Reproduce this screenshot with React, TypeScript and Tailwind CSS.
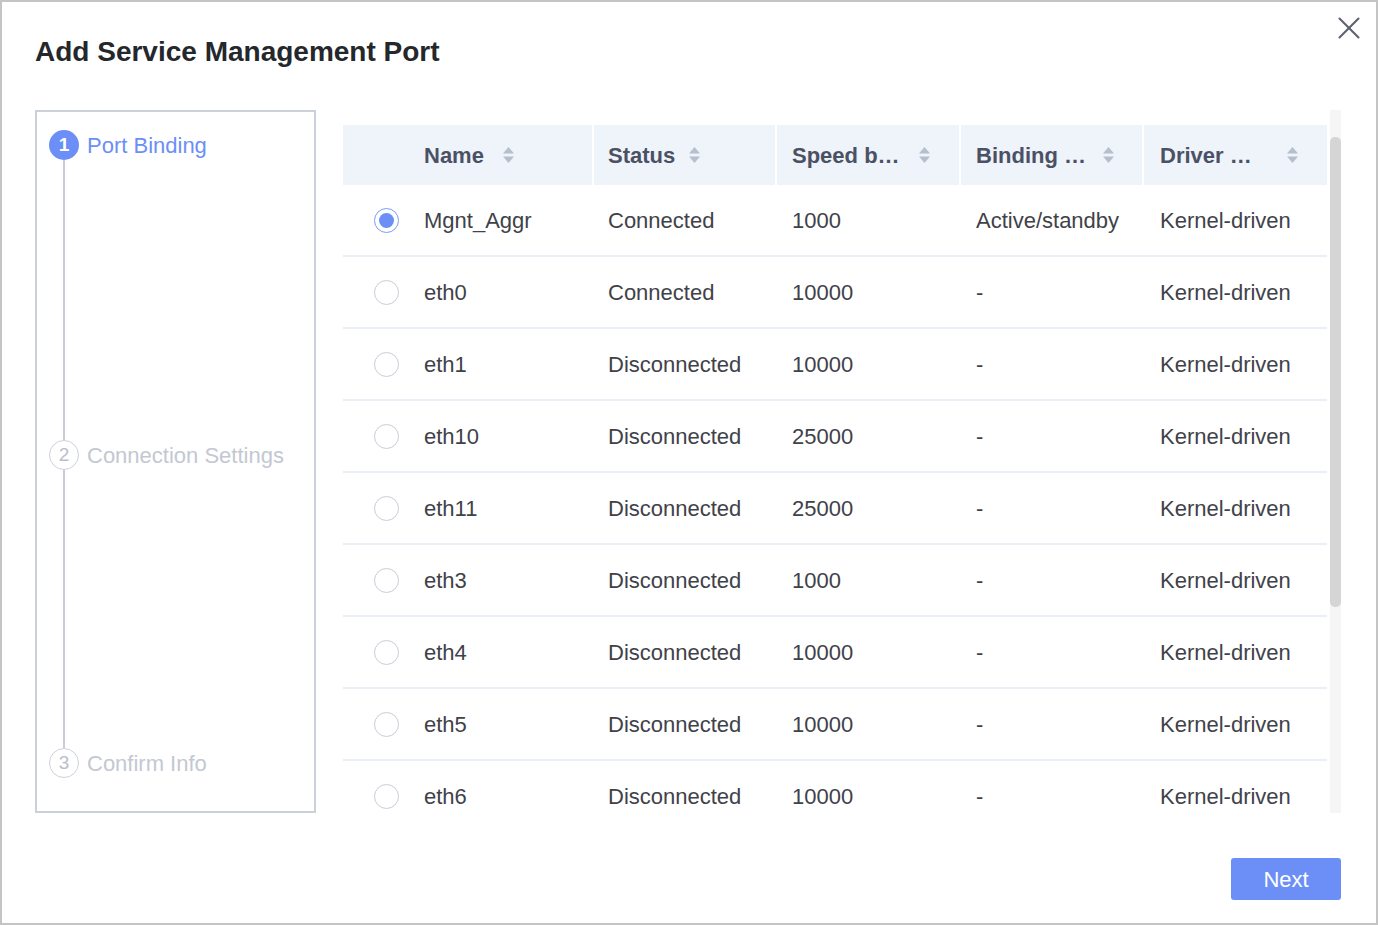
import { X } from 'lucide-react';

interface PortRow {
  name: string;
  status: string;
  speed: string;
  binding: string;
  driver: string;
}

const rows: PortRow[] = [
  { name: 'Mgnt_Aggr', status: 'Connected', speed: '1000', binding: 'Active/standby', driver: 'Kernel-driven' },
  { name: 'eth0', status: 'Connected', speed: '10000', binding: '-', driver: 'Kernel-driven' },
  { name: 'eth1', status: 'Disconnected', speed: '10000', binding: '-', driver: 'Kernel-driven' },
  { name: 'eth10', status: 'Disconnected', speed: '25000', binding: '-', driver: 'Kernel-driven' },
  { name: 'eth11', status: 'Disconnected', speed: '25000', binding: '-', driver: 'Kernel-driven' },
  { name: 'eth3', status: 'Disconnected', speed: '1000', binding: '-', driver: 'Kernel-driven' },
  { name: 'eth4', status: 'Disconnected', speed: '10000', binding: '-', driver: 'Kernel-driven' },
  { name: 'eth5', status: 'Disconnected', speed: '10000', binding: '-', driver: 'Kernel-driven' },
  { name: 'eth6', status: 'Disconnected', speed: '10000', binding: '-', driver: 'Kernel-driven' },
];

function SortIcon() {
  return (
    <svg width="11" height="16" viewBox="0 0 11 16" className="shrink-0">
      <polygon points="5.5,0 11,6.5 0,6.5" fill="#b8bfcc" />
      <polygon points="0,9.5 11,9.5 5.5,16" fill="#b8bfcc" />
    </svg>
  );
}

function Radio({ checked }: { checked: boolean }) {
  return checked ? (
    <span className="flex h-[25px] w-[25px] items-center justify-center rounded-full border-[1.5px] border-[#7d9bf7] bg-white">
      <span className="h-[15px] w-[15px] rounded-full bg-[#6b8ff7]" />
    </span>
  ) : (
    <span className="block h-[25px] w-[25px] rounded-full border-[1.5px] border-[#c9cdd7] bg-white" />
  );
}

function Step({ index, label, active }: { index: number; label: string; active?: boolean }) {
  return (
    <div className="flex h-[30px] items-center gap-[8px]">
      {active ? (
        <span className="flex h-[30px] w-[30px] items-center justify-center rounded-full bg-[#6b8ff7] text-[19px] font-bold text-white">
          {index}
        </span>
      ) : (
        <span className="flex h-[30px] w-[30px] items-center justify-center rounded-full border-[1.5px] border-[#cdd1dc] text-[19px] text-[#b9bec9]">
          {index}
        </span>
      )}
      <span className={active ? 'text-[22px] text-[#6b8ff7]' : 'text-[22px] text-[#c3c8d2]'}>{label}</span>
    </div>
  );
}

export default function App() {
  return (
    <div
      className="relative h-[925px] w-[1378px] border-2 border-[#c4c4c4] bg-white pl-[33px] pr-[35px] pt-[33px]"
      style={{ fontFamily: '"Liberation Sans", Arial, sans-serif' }}
    >
      <button className="absolute right-[8px] top-[7px] text-[#5d6270]">
        <X size={38} strokeWidth={1.3} />
      </button>

      <h1 className="h-[34px] text-[28px] font-bold leading-[34px] text-[#24272c]">Add Service Management Port</h1>

      <div className="mt-[41px] flex h-[703px] gap-[27px]">
        {/* steps */}
        <div className="w-[281px] shrink-0 border-2 border-[#ccd0da] pl-[12px] pt-[18px]">
          <Step index={1} label="Port Binding" active />
          <div className="ml-[14px] h-[280px] w-[2px] bg-[#c8ccd7]" />
          <Step index={2} label="Connection Settings" />
          <div className="ml-[14px] h-[278px] w-[2px] bg-[#c8ccd7]" />
          <Step index={3} label="Confirm Info" />
        </div>

        {/* table + scrollbar */}
        <div className="flex flex-1 gap-[3px] overflow-hidden">
          <div className="w-[984px] overflow-hidden pt-[15px]">
            <div className="flex h-[60px] items-center bg-[#eff3fa] text-[22px] font-bold text-[#4a5164]">
              <div className="h-full w-[66px]" />
              <div className="flex h-full w-[183px] items-center pl-[15px]">
                <span>Name</span>
                <span className="ml-[19px]"><SortIcon /></span>
              </div>
              <div className="flex h-full w-[183px] items-center border-l-2 border-white pl-[14px]">
                <span>Status</span>
                <span className="ml-[14px]"><SortIcon /></span>
              </div>
              <div className="flex h-full w-[184px] items-center border-l-2 border-white pl-[15px]">
                <span className="w-[114px] whitespace-nowrap">Speed b…</span>
                <span className="ml-[13px]"><SortIcon /></span>
              </div>
              <div className="flex h-full w-[183px] items-center border-l-2 border-white pl-[15px]">
                <span className="w-[114px] whitespace-nowrap">Binding …</span>
                <span className="ml-[13px]"><SortIcon /></span>
              </div>
              <div className="flex h-full w-[185px] items-center border-l-2 border-white pl-[16px]">
                <span className="w-[114px] whitespace-nowrap">Driver …</span>
                <span className="ml-[13px]"><SortIcon /></span>
              </div>
            </div>

            {rows.map((row, i) => (
              <div
                key={row.name}
                className="flex h-[72px] items-center border-b-2 border-[#e9eef7] text-[22px] text-[#3f4249]"
              >
                <div className="w-[66px] pl-[31px]">
                  <Radio checked={i === 0} />
                </div>
                <div className="w-[183px] pl-[15px]">{row.name}</div>
                <div className="w-[183px] pl-[16px]">{row.status}</div>
                <div className="w-[184px] pl-[17px]">{row.speed}</div>
                <div className="w-[183px] pl-[17px]">{row.binding}</div>
                <div className="w-[185px] pl-[18px]">{row.driver}</div>
              </div>
            ))}
          </div>

          <div className="h-full w-[11px] bg-[#f5f5f5] pt-[27px]">
            <div className="h-[470px] w-full rounded-[5px] bg-[#d5d5d5]" />
          </div>
        </div>
      </div>

      <div className="mt-[45px] flex justify-end">
        <button className="h-[42px] w-[110px] rounded-[3px] bg-[#6b8ff7] text-[22px] text-white">Next</button>
      </div>
    </div>
  );
}
